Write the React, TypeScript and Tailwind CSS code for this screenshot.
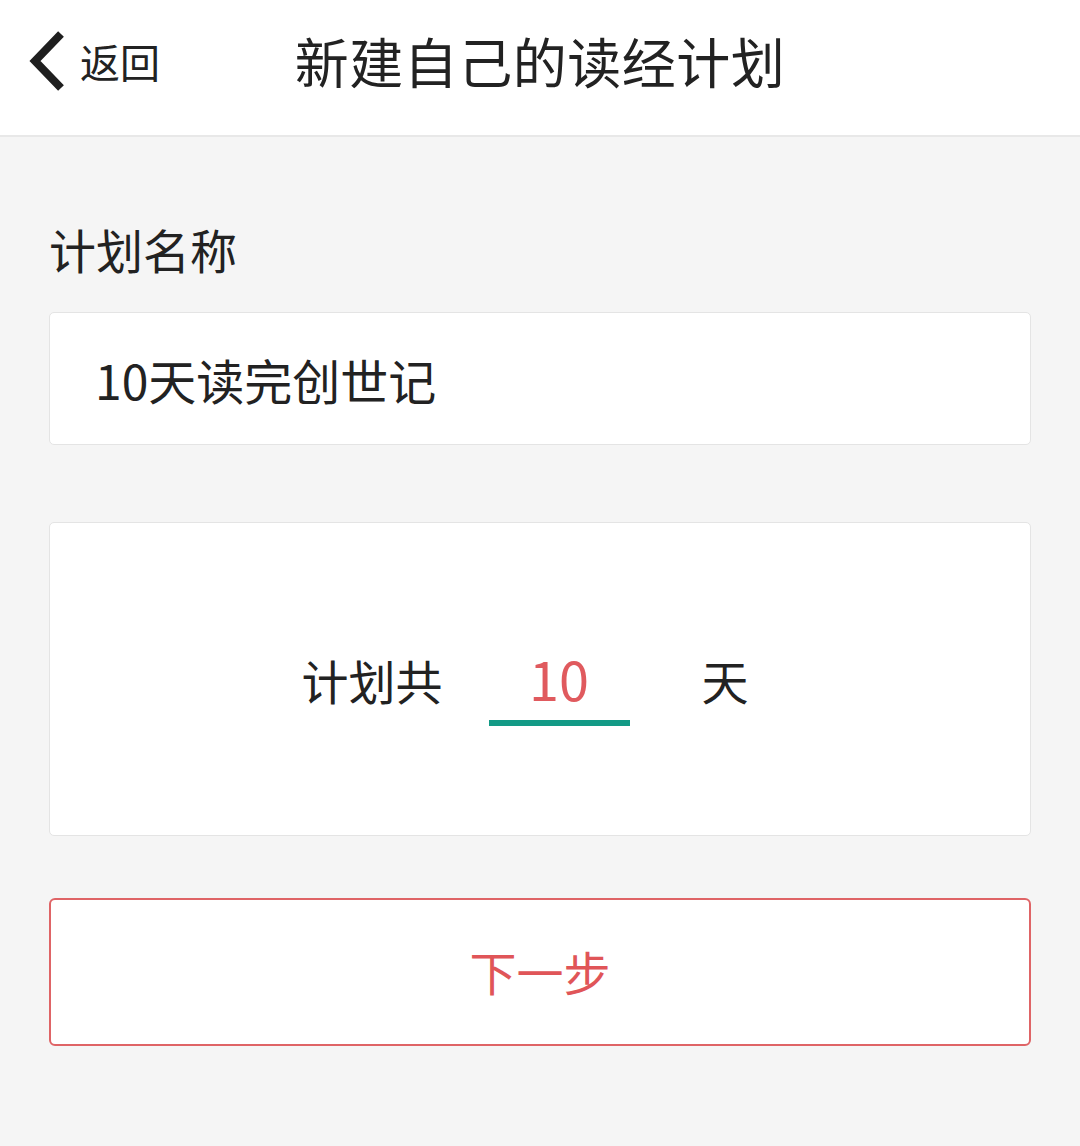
import { useState } from "react";

// 新建读经计划 页面
export default function App() {
  const [planName, setPlanName] = useState("10天读完创世记");
  const [days, setDays] = useState("10");

  return (
    <div
      className="min-h-[1146px] w-full bg-[#f5f5f5] text-[#222222]"
      style={{ fontFamily: '"Noto Sans CJK SC", "Noto Sans", sans-serif' }}
    >
      {/* 顶部导航 */}
      <header className="grid h-[137px] grid-cols-[1fr_auto_1fr] items-center border-b-2 border-[#e8e8e8] bg-white pb-[14px]">
        <button className="flex items-center gap-[12px] pl-[28px] text-left">
          <svg
            className="h-[62px] w-[40px]"
            viewBox="0 0 40 62"
            fill="none"
            stroke="#1f1f1f"
            strokeWidth="8"
            strokeLinecap="butt"
            strokeLinejoin="miter"
          >
            <polyline points="33,4 7,31 33,58" />
          </svg>
          <span className="text-[40px] leading-none">返回</span>
        </button>
        <h1 className="text-[54px] leading-none font-normal tracking-[0.5px]">
          新建自己的读经计划
        </h1>
        <div />
      </header>

      <main className="px-[49px] pt-[88px]">
        <label className="block text-[47px] leading-[47px]">计划名称</label>

        <div className="mt-[40px] flex h-[133px] items-center rounded-[5px] border border-[#e4e4e4] bg-white pl-[45px]">
          <input
            value={planName}
            onChange={(e) => setPlanName(e.target.value)}
            className="w-full bg-transparent text-[48px] leading-none text-[#222222] outline-none"
          />
        </div>

        <div className="mt-[77px] flex h-[314px] items-center justify-center rounded-[5px] border border-[#e4e4e4] bg-white pt-[14px] pr-[30px]">
          <span className="flex h-[70px] items-center pb-[14px] text-[47px] leading-none">
            计划共
          </span>
          <div className="ml-[46px] mt-[10px] flex h-[70px] w-[141px] items-center justify-center border-b-[6px] border-[#139a86] pb-[22px]">
            <input
              value={days}
              onChange={(e) => setDays(e.target.value)}
              className="w-full bg-transparent text-center text-[54px] leading-none text-[#e05a5e] outline-none"
            />
          </div>
          <span className="ml-[72px] flex h-[70px] items-center pb-[14px] text-[47px] leading-none">
            天
          </span>
        </div>

        <button className="mt-[62px] flex h-[148px] w-full items-center justify-center rounded-[6px] border-2 border-[#df6466] bg-white pb-[4px] text-[47px] leading-none text-[#e05558]">
          下一步
        </button>
      </main>
    </div>
  );
}
